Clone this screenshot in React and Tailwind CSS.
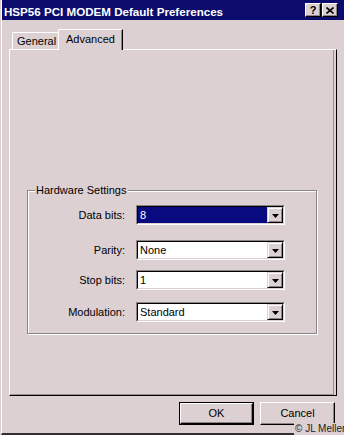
import React from "react";

function Combo({ value, selected, className }) {
  return (
    <div className={"h-[20px] border border-t-[#8e8488] border-l-[#8e8488] border-r-white border-b-white " + (className || "")}>
      <div className="h-full flex border border-t-black border-l-black border-r-[#dcd0d3] border-b-[#dcd0d3] bg-white">
        <div className={"flex-1 flex items-center pl-[2px] " + (selected ? "bg-[#0a0a80] text-white" : "text-black")}>
          <span className="leading-[13px] pt-[1px]">{value}</span>
        </div>
        <div className="w-[16px] h-full flex items-center justify-center border border-t-[#dcd0d3] border-l-[#dcd0d3] border-r-black border-b-black bg-[#dcd0d3] shadow-[inset_1px_1px_0_#ffffff,inset_-1px_-1px_0_#8e8488]">
          <svg width="7" height="4" viewBox="0 0 7 4" className="mt-[1px]">
            <path d="M0 0h7L3.5 4z" fill="#000" />
          </svg>
        </div>
      </div>
    </div>
  );
}

export default function App() {
  const rows = [
    { label: "Data bits:", value: "8", selected: true, mt: "mt-[14px]" },
    { label: "Parity:", value: "None", mt: "mt-[15px]" },
    { label: "Stop bits:", value: "1", mt: "mt-[10px]" },
    { label: "Modulation:", value: "Standard", mt: "mt-[12px]" },
  ];
  return (
    <div className="w-[344px] h-[435px] bg-[#dcd0d3] relative overflow-hidden font-['Liberation_Sans',Arial,sans-serif] text-[11px] text-black">
      <div className="h-full ml-[1px] flex flex-col border-l border-l-white border-b-2 border-b-[#303030]">
        {/* Title bar */}
        <div className="h-[20px] bg-[#0b0c6c] flex items-start justify-between pl-[2px] pr-[6px]">
          <span className="text-white font-bold text-[11.6px] leading-[16px] pt-[4px] whitespace-nowrap">
            HSP56 PCI MODEM Default Preferences
          </span>
          <div className="flex gap-[1px] mt-[3px]">
            <div className="w-[16px] h-[14px] flex items-center justify-center bg-[#dcd0d3] border border-t-white border-l-white border-r-black border-b-black shadow-[inset_-1px_-1px_0_#8e8488]">
              <span className="font-bold text-[11px] leading-[11px] text-black">?</span>
            </div>
            <div className="w-[16px] h-[14px] flex items-center justify-center bg-[#dcd0d3] border border-t-white border-l-white border-r-black border-b-black shadow-[inset_-1px_-1px_0_#8e8488]">
              <svg width="8" height="7" viewBox="0 0 8 7">
                <path d="M0.5 0.5L7.5 6.5M7.5 0.5L0.5 6.5" stroke="#000" strokeWidth="1.6" />
              </svg>
            </div>
          </div>
        </div>

        {/* Tabs */}
        <div className="h-[20px] mt-[9px] flex items-end pl-[10px] relative z-10">
          <div className="h-[17px] w-[48px] border-t border-l border-white rounded-tl-[2px] flex items-start pl-[4px]">
            <span className="leading-[13px] pt-[2px]">General</span>
          </div>
          <div className="h-[21px] w-[65px] -ml-[2px] -mb-[1px] bg-[#dcd0d3] border-t border-l border-white border-r border-r-black rounded-tl-[2px] shadow-[inset_-1px_0_0_#8e8488] flex items-start pl-[7px]">
            <span className="leading-[13px] pt-[3px]">Advanced</span>
          </div>
        </div>

        {/* Panel */}
        <div className="ml-[7px] w-[328px] h-[347px] border-t border-l border-white border-r border-r-black border-b border-b-black shadow-[inset_-2px_0_0_#dcd0d3,inset_-3px_0_0_#9a9094,inset_0_-1px_0_#9a9094] flex flex-col">
          <div className="ml-[17px] mt-[140px] w-[290px] h-[144px] border border-[#8e8488] shadow-[inset_1px_1px_0_#ffffff,1px_1px_0_#ffffff] relative">
            <span className="absolute left-[7px] top-[-7px] px-[1px] bg-[#dcd0d3] leading-[13px] whitespace-nowrap">
              Hardware Settings
            </span>
            <div className="flex flex-col">
              {rows.map((r) => (
                <div key={r.label} className={"flex items-center " + r.mt}>
                  <div className="w-[97px] text-right leading-[13px] pt-[1px]">{r.label}</div>
                  <Combo value={r.value} selected={r.selected} className="ml-[11px] w-[149px]" />
                </div>
              ))}
            </div>
          </div>
        </div>

        {/* Buttons */}
        <div className="mt-[6px] flex justify-end gap-[6px] pr-[9px]">
          <div className="w-[75px] h-[23px] border border-black">
            <div className="h-full flex items-center justify-center border border-t-white border-l-white border-r-black border-b-black shadow-[inset_-1px_-1px_0_#8e8488]">
              <span className="leading-[13px]">OK</span>
            </div>
          </div>
          <div className="w-[75px] h-[23px] flex items-center justify-center border border-t-white border-l-white border-r-black border-b-black shadow-[inset_-1px_-1px_0_#8e8488]">
            <span className="leading-[13px]">Cancel</span>
          </div>
        </div>
      </div>
      <span className="absolute left-[294px] top-[423px] text-[10px] leading-[12px] whitespace-nowrap bg-[#dcd0d3] pl-[1px] text-[#202020]">
        © JL Meller
      </span>
    </div>
  );
}
